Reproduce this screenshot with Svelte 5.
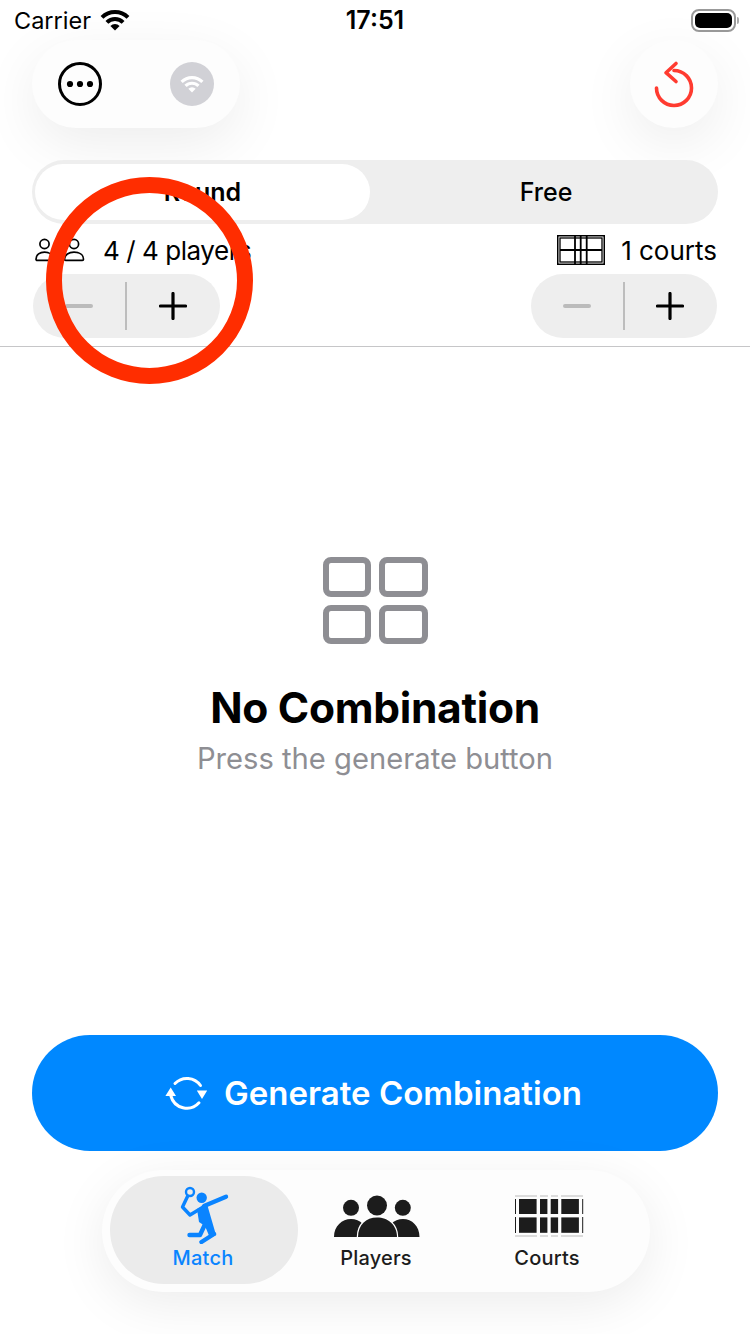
{#snippet wifi(cls)}
  <svg class={cls} viewBox="0 0 30 22" aria-hidden="true">
    <path d="M2 8.4A18.5 18.5 0 0 1 28 8.4M6.9 13.4A11.5 11.5 0 0 1 23.1 13.4" fill="none" stroke="currentColor" stroke-width="4"/>
    <path d="M15 21.5L10.4 16.9A6.5 6.5 0 0 1 19.6 16.9Z" fill="currentColor"/>
  </svg>
{/snippet}

{#snippet stepper()}
  <div class="stepper">
    <div class="step"><span class="minus"></span></div>
    <span class="step-div"></span>
    <div class="step">
      <svg class="plus" viewBox="0 0 28 28" aria-hidden="true"><path d="M14 1.5V26.5M1.5 14H26.5" stroke="#000" stroke-width="3.2" stroke-linecap="round"/></svg>
    </div>
  </div>
{/snippet}

<div class="screen">
  <header class="status">
    <div class="status-left">
      <span class="carrier">Carrier</span>
      {@render wifi("status-wifi")}
    </div>
    <span class="time">17:51</span>
    <div class="battery"><span class="battery-body"><span class="battery-fill"></span></span><span class="battery-nub"></span></div>
  </header>

  <div class="toolbar">
    <div class="float pill">
      <svg class="ico-44" viewBox="0 0 44 44" aria-hidden="true">
        <circle cx="22" cy="22" r="20.5" fill="none" stroke="#000" stroke-width="3"/>
        <circle cx="12" cy="22" r="3.1"/><circle cx="22" cy="22" r="3.1"/><circle cx="32" cy="22" r="3.1"/>
      </svg>
      <div class="wifi-badge">{@render wifi("badge-wifi")}</div>
    </div>
    <div class="float round">
      <svg class="ico-reset" viewBox="0 0 44 48" aria-hidden="true">
        <path d="M4.5 28A17.5 17.5 0 1 0 22 10.5" fill="none" stroke="#ff3b30" stroke-width="3.6" stroke-linecap="round"/>
        <path d="M24 3.5L14 12.7L24 21.5" fill="none" stroke="#ff3b30" stroke-width="3.6" stroke-linecap="round" stroke-linejoin="round"/>
      </svg>
    </div>
  </div>

  <div class="segment">
    <div class="seg seg-on">Round</div>
    <div class="seg seg-off">Free</div>
  </div>

  <div class="info">
    <div class="info-item players-item">
      <svg class="ico-players" viewBox="0 0 50 24" aria-hidden="true" fill="none" stroke="#000" stroke-width="1.7">
        <circle cx="9.5" cy="6" r="4.6"/>
        <path d="M1 21.2C1 16.5 5 14.2 9.5 14.2C14 14.2 18 16.5 18 21.2C18 22 17.5 22.4 16.8 22.4H2.2C1.5 22.4 1 22 1 21.2Z"/>
        <circle cx="39" cy="6" r="4.6"/>
        <path d="M29.5 21.2C29.5 16.5 34 14.2 39 14.2C44 14.2 48.5 16.5 48.5 21.2C48.5 22 48 22.4 47.3 22.4H30.7C30 22.4 29.5 22 29.5 21.2Z"/>
      </svg>
      <span class="players-text">4 / 4 players</span>
    </div>
    <div class="info-item courts-item">
      <svg class="ico-court" viewBox="0 0 48 30" aria-hidden="true" fill="none" stroke="#000">
        <rect x=".75" y=".75" width="46.5" height="28.5" stroke-width="1.5"/>
        <rect x="3" y="3" width="42" height="24" stroke-width="1.3"/>
        <path d="M3 15H45" stroke-width="2.2"/>
        <path d="M18 1V29M23.7 1V29M29.7 1V29" stroke-width="1.8"/>
      </svg>
      <span>1 courts</span>
    </div>
  </div>

  <div class="steppers">
    {@render stepper()}
    {@render stepper()}
  </div>

  <div class="rule"></div>

  <main class="empty">
    <div class="grid-icon">
      <span></span><span></span><span></span><span></span>
    </div>
    <h1>No Combination</h1>
    <p>Press the generate button</p>
  </main>

  <button class="generate">
    <svg class="ico-sync" viewBox="164 1072 48 44" aria-hidden="true">
      <path d="M176 1084.5A16.5 16.5 0 0 1 201.5 1086.5M171.9 1097A16.5 16.5 0 0 0 200 1103.8" fill="none" stroke="#fff" stroke-width="3" stroke-linecap="round"/>
      <path d="M171.7 1088.5L177 1097H166.4ZM203 1100L197.8 1091.6H208.2Z" fill="#fff"/>
    </svg>
    <span>Generate Combination</span>
  </button>

  <nav class="tabbar">
    <div class="tab tab-on">
      <svg class="tab-ico" viewBox="176 1186 56 58" aria-hidden="true">
        <circle cx="190" cy="1192" r="4" fill="none" stroke="#0a84ff" stroke-width="2.4"/>
        <g fill="none" stroke="#0a84ff" stroke-linecap="round" stroke-linejoin="round">
          <path d="M187.5 1196.5L182.5 1207L190 1215L204 1206.5" stroke-width="3.4"/>
          <path d="M204 1206L226 1196.7" stroke-width="4.4"/>
          <path d="M189.5 1235H200L207 1220" stroke-width="4.4"/>
          <path d="M201.5 1242L214 1234" stroke-width="4.4"/>
        </g>
        <circle cx="201.7" cy="1197.7" r="5.2" fill="#0a84ff"/>
        <path d="M197 1209L207 1204L216 1235L210 1238L205 1226L199 1222Z" fill="#0a84ff"/>
      </svg>
      <span>Match</span>
    </div>
    <div class="tab tab-mid">
      <svg class="tab-ico" viewBox="330 1186 94 58" aria-hidden="true">
        <circle cx="351" cy="1207.8" r="8" fill="#1c1c1c"/>
        <circle cx="402.8" cy="1207.8" r="8" fill="#1c1c1c"/>
        <path d="M334 1237C334 1226 342 1219 351 1219C360 1219 368 1226 368 1237ZM386 1237C386 1226 394 1219 403 1219C412 1219 419.5 1226 419.5 1237Z" fill="#1c1c1c"/>
        <circle cx="377" cy="1205.5" r="10" fill="#1c1c1c"/>
        <path d="M358 1237C358 1225 366 1217.5 377 1217.5C388 1217.5 397 1225 397 1237Z" fill="#1c1c1c" stroke="#fff" stroke-width="2.5" paint-order="stroke"/>
      </svg>
      <span>Players</span>
    </div>
    <div class="tab tab-end">
      <svg class="tab-ico" viewBox="512 1186 74 58" aria-hidden="true">
        <path d="M515 1196H537M540 1196H548M551 1196H558M561 1196H583M515 1236H537M540 1236H548M551 1236H558M561 1236H583" stroke="#dcdcdc" stroke-width="2"/>
        <path d="M515.5 1199V1214M515.5 1217V1233M582.7 1199V1214M582.7 1217V1233" stroke="#1c1c1c" stroke-width="1"/>
        <g fill="#1c1c1c">
          <rect x="519" y="1199" width="17.6" height="15"/><rect x="540" y="1199" width="7.4" height="15"/><rect x="550.7" y="1199" width="7.4" height="15"/><rect x="561.3" y="1199" width="17.6" height="15"/>
          <rect x="519" y="1217.4" width="17.6" height="15.4"/><rect x="540" y="1217.4" width="7.4" height="15.4"/><rect x="550.7" y="1217.4" width="7.4" height="15.4"/><rect x="561.3" y="1217.4" width="17.6" height="15.4"/>
        </g>
      </svg>
      <span>Courts</span>
    </div>
  </nav>

  <div class="highlight"></div>
</div>

<style>
  :global(body) { margin: 0; background: #fff; }
  .screen {
    position: relative;
    width: 750px;
    height: 1334px;
    overflow: hidden;
    background: #fff;
    color: #000;
    font-family: Inter, "Noto Sans", sans-serif;
    display: flex;
    flex-direction: column;
  }
  svg { display: block; flex: none; }

  .status {
    position: relative;
    height: 40px;
    padding: 0 11px 0 14px;
    box-sizing: border-box;
    display: flex;
    align-items: center;
    justify-content: space-between;
  }
  .status-left { display: flex; align-items: center; gap: 9px; }
  .carrier { font-size: 23.5px; }
  .status-wifi { width: 30px; height: 22px; }
  .time {
    position: absolute;
    left: 0;
    right: 0;
    text-align: center;
    font-size: 25px;
    font-weight: 600;
  }
  .battery { display: flex; align-items: center; gap: 1px; }
  .battery-body {
    width: 45px;
    height: 23px;
    box-sizing: border-box;
    border: 2px solid #999;
    border-radius: 8px;
    padding: 2px;
    display: flex;
  }
  .battery-fill { flex: 1; background: #000; border-radius: 5px; }
  .battery-nub { width: 2px; height: 7px; background: #aaa; border-radius: 0 2px 2px 0; }

  .toolbar {
    height: 88px;
    padding: 0 32px;
    display: flex;
    justify-content: space-between;
  }
  .float {
    background: #fdfdfd;
    border-radius: 44px;
    box-shadow: 0 16px 56px rgba(0, 0, 0, .075);
    display: flex;
    align-items: center;
    justify-content: center;
  }
  .pill { width: 208px; gap: 68px; }
  .ico-44 { width: 44px; height: 44px; }
  .wifi-badge {
    width: 44px;
    height: 44px;
    border-radius: 50%;
    background: #d1d1d6;
    color: #fff;
    display: flex;
    align-items: center;
    justify-content: center;
  }
  .badge-wifi { width: 24px; height: 18px; }
  .round { width: 88px; }
  .ico-reset { width: 44px; height: 48px; }

  .segment {
    margin: 32px 32px 0;
    height: 64px;
    padding: 4px 0 4px 3px;
    box-sizing: border-box;
    background: #eee;
    border-radius: 32px;
    display: grid;
    grid-template-columns: 335px 1fr;
    font-size: 25px;
    font-weight: 500;
  }
  .seg { display: flex; align-items: center; justify-content: center; border-radius: 28px; }
  .seg-on { background: #fff; font-weight: 600; }
  .seg-off { padding-left: 4px; }

  .info {
    height: 50px;
    box-sizing: border-box;
    padding: 2px 33px 0 35px;
    display: flex;
    align-items: center;
    justify-content: space-between;
    font-size: 26px;
  }
  .info-item { display: flex; align-items: center; gap: 19px; }
  .players-item { gap: 18px; }
  .players-text { letter-spacing: -.45px; }
  .courts-item { gap: 16px; }
  .ico-players { width: 50px; height: 24px; }
  .ico-court { width: 48px; height: 30px; }

  .steppers { padding: 0 33px; display: flex; justify-content: space-between; }
  .stepper {
    width: 186.5px;
    height: 64px;
    border-radius: 32px;
    background: #eee;
    display: grid;
    grid-template-columns: 1fr 2px 1fr;
    align-items: center;
  }
  .step { display: flex; align-items: center; justify-content: center; }
  .step-div { height: 48px; background: #bdbdbd; }
  .minus { width: 28px; height: 4px; border-radius: 2px; background: #bbb; }
  .plus { width: 28px; height: 28px; margin-right: 1px; }

  .rule { margin-top: 8px; height: 1px; background: #c6c6c8; }

  .empty {
    flex: 1;
    padding-top: 210px;
    display: flex;
    flex-direction: column;
    align-items: center;
    text-align: center;
  }
  .grid-icon {
    width: 105px;
    height: 87px;
    display: grid;
    grid-template-columns: 1fr 1fr;
    grid-template-rows: 1fr 1fr;
    gap: 8px;
  }
  .grid-icon span {
    box-sizing: border-box;
    border: 6.5px solid #8e8e93;
    border-radius: 8px;
  }
  h1 { margin: 39px 0 0; font-size: 42.5px; line-height: 50px; font-weight: 700; letter-spacing: -.3px; }
  p { margin: 8px 0 0; font-size: 29.2px; line-height: 36px; color: #8e8e93; }

  .generate {
    margin: 0 32px;
    height: 116px;
    padding: 0 5px 0 0;
    flex: none;
    border: 0;
    border-radius: 58px;
    background: #0088ff;
    color: #fff;
    font: 600 33px Inter, "Noto Sans", sans-serif;
    display: flex;
    align-items: center;
    justify-content: center;
    gap: 13px;
  }
  .ico-sync { width: 48px; height: 44px; }

  .tabbar {
    margin: 19px 100px 42px 102px;
    height: 122px;
    flex: none;
    box-sizing: border-box;
    padding: 6px 8px 8px;
    background: #fdfdfd;
    border-radius: 61px;
    box-shadow: 0 12px 52px rgba(0, 0, 0, .08);
    display: grid;
    grid-template-columns: 188px 156px 1fr;
  }
  .tab {
    display: flex;
    flex-direction: column;
    align-items: center;
    padding-top: 10px;
    font-size: 20px;
    font-weight: 500;
    color: #1c1c1c;
  }
  .tab span { line-height: 28px; letter-spacing: .2px; }
  .tab-on { background: #ebebeb; border-radius: 54px; color: #0a84ff; }
  .tab-on span, .tab-end span { padding-right: 2px; }
  .tab-mid svg, .tab-end svg { margin-left: 2px; }
  .tab-ico { height: 58px; width: auto; }

  .highlight {
    position: absolute;
    left: 46px;
    top: 177px;
    width: 207px;
    height: 207px;
    box-sizing: border-box;
    border: 16px solid #ff2d00;
    border-radius: 50%;
  }
</style>
